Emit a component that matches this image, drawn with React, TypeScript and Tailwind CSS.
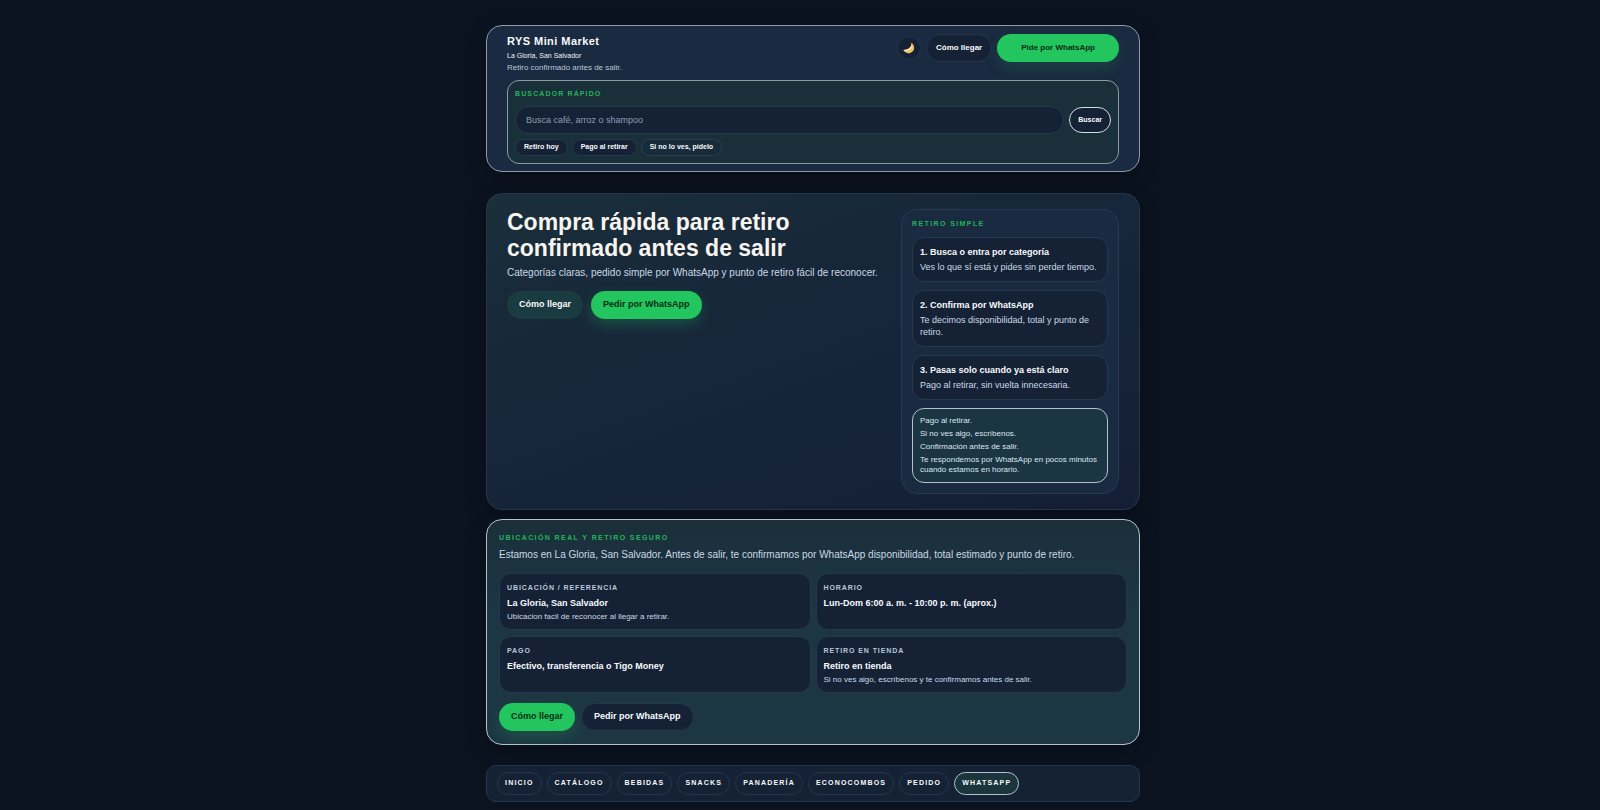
import type { ReactNode } from "react";

const chips = ["Retiro hoy", "Pago al retirar", "Si no lo ves, pídelo"];

const steps = [
  { title: "1. Busca o entra por categoría", text: "Ves lo que sí está y pides sin perder tiempo." },
  { title: "2. Confirma por WhatsApp", text: "Te decimos disponibilidad, total y punto de retiro." },
  { title: "3. Pasas solo cuando ya está claro", text: "Pago al retirar, sin vuelta innecesaria." },
];

const notes = [
  "Pago al retirar.",
  "Si no ves algo, escríbenos.",
  "Confirmación antes de salir.",
  "Te respondemos por WhatsApp en pocos minutos cuando estamos en horario.",
];

const facts = [
  { label: "Ubicación / referencia", value: "La Gloria, San Salvador", note: "Ubicacion facil de reconocer al llegar a retirar." },
  { label: "Horario", value: "Lun-Dom 6:00 a. m. - 10:00 p. m. (aprox.)", note: "" },
  { label: "Pago", value: "Efectivo, transferencia o Tigo Money", note: "" },
  { label: "Retiro en tienda", value: "Retiro en tienda", note: "Si no ves algo, escríbenos y te confirmamos antes de salir." },
];

const links = ["Inicio", "Catálogo", "Bebidas", "Snacks", "Panadería", "Econocombos", "Pedido"];

function Eyebrow({ children }: { children: ReactNode }) {
  return <h2 className="text-[7px] leading-[10px] font-bold uppercase tracking-[0.2em] text-[#22b357]">{children}</h2>;
}

function Moon() {
  return (
    <svg viewBox="0 0 24 24" className="size-3" aria-hidden="true">
      <path d="M16.500 1.500c2 6.500-3.500 14-15.500 14.500 2.300 5 8 7.500 13.500 6C23.500 19.500 25.500 7.500 16.500 1.500z" fill="#f2c06a" />
      <path d="M16.500 1.500c2 6.500-3.500 14-15.500 14.500.4.9.9 1.700 1.500 2.400C15.500 18.500 20.500 10.500 16.500 1.500z" fill="#fde3a7" />
    </svg>
  );
}

export default function App() {
  return (
    <div className="min-h-screen bg-[#0b1320] pt-[25px] pb-2 pl-[26px] font-['Liberation_Sans',Arial,sans-serif] text-[#f8fafc]">
      <div className="mx-auto flex w-full max-w-[654px] flex-col">
        <header className="rounded-[16px] border border-[#8f9bab] bg-[#1a2a40] px-5 pt-2 pb-[7px] shadow-[0_6px_20px_rgba(0,0,0,0.25)]">
          <div className="flex items-start justify-between">
            <div>
              <p className="text-[11px] leading-[15px] font-bold tracking-[0.04em]">RYS Mini Market</p>
              <p className="mt-px text-[7px] leading-3 text-[#eef4fb]">La Gloria, San Salvador</p>
              <p className="text-[8px] leading-3 text-[#b9c7d8]">Retiro confirmado antes de salir.</p>
            </div>
            <div className="flex items-center gap-[5px]">
              <button type="button" aria-label="Cambiar tema" className="flex size-6 items-center justify-center rounded-full border border-[#24354b] bg-[#152236]">
                <Moon />
              </button>
              <a href="#llegar" className="flex h-7 items-center rounded-full border border-[#24354b] bg-[#152236] px-[9px] text-[8px] font-bold">Cómo llegar</a>
              <a href="#whatsapp" className="flex h-7 items-center rounded-full bg-[#22c55e] px-6 text-[8px] font-bold text-[#052e16] shadow-[0_6px_14px_rgba(34,197,94,0.14)]">Pide por WhatsApp</a>
            </div>
          </div>
          <form className="mt-[6px] rounded-[12px] border border-[#8b9c9f] bg-[#192f3a] px-[7px] pt-2 pb-[7px]">
            <label htmlFor="buscador" className="block text-[7px] leading-[10px] font-bold uppercase tracking-[0.16em] text-[#22b357]">Buscador rápido</label>
            <div className="mt-[7px] flex items-center gap-[5px]">
              <input id="buscador" type="search" placeholder="Busca café, arroz o shampoo" className="h-7 min-w-0 flex-1 rounded-full border border-[#24394a] bg-[#152236] px-[10px] text-[9px] outline-none placeholder:text-[#8f9db1]" />
              <button type="button" className="h-[26px] rounded-full border border-[#d5dce5] bg-[#152236] px-2 text-[7px] font-bold">Buscar</button>
            </div>
            <div className="mt-[5px] flex gap-1">
              {chips.map((c, i) => (
                <span key={c} className={`flex h-[17px] items-center rounded-full border px-2 text-[7px] font-bold ${i < 2 ? "border-[#24394a] bg-[#152236]" : "border-[#2a4150] bg-[#182b3a]"}`}>{c}</span>
              ))}
            </div>
          </form>
        </header>

        <main className="mt-[21px] flex flex-col gap-[9px]">
          <section className="grid grid-cols-[1fr_218px] gap-4 rounded-[16px] border border-[#26374c] bg-[linear-gradient(160deg,#1a2f3a_0%,#17273a_35%,#141f36_100%)] px-5 py-[15px] shadow-[0_6px_20px_rgba(0,0,0,0.25)]">
            <div>
              <h1 className="text-[23px] leading-[26px] font-bold text-[#f8f5f0]">Compra rápida para retiro<br />confirmado antes de salir</h1>
              <p className="mt-1 text-[10px] leading-4 text-[#cbd8e8]">Categorías claras, pedido simple por WhatsApp y punto de retiro fácil de reconocer.</p>
              <div className="mt-[10px] flex gap-2">
                <a href="#llegar" className="flex h-7 items-center rounded-full bg-[#1a3b3f] px-3 text-[9px] font-bold">Cómo llegar</a>
                <a href="#whatsapp" className="flex h-7 items-center rounded-full bg-[#22c55e] px-3 text-[9px] font-bold text-[#052e16] shadow-[0_6px_14px_rgba(34,197,94,0.25)]">Pedir por WhatsApp</a>
              </div>
            </div>
            <aside className="flex flex-col gap-2 rounded-[16px] border border-[#283b50] bg-[#1a2a40] px-[10px] pt-[9px] pb-[10px]">
              <Eyebrow>Retiro simple</Eyebrow>
              {steps.map((s) => (
                <div key={s.title} className="rounded-[12px] border border-[#263a4e] bg-[#152236] px-[7px] py-2">
                  <h3 className="text-[9px] leading-3 font-bold">{s.title}</h3>
                  <p className="mt-[3px] text-[9px] leading-3 text-[#cbd8e8]">{s.text}</p>
                </div>
              ))}
              <ul className="flex flex-col gap-[3px] rounded-[12px] border border-[#b4c2cb] bg-[#1c3542] p-[7px] text-[8px] leading-[10px] text-[#dbe6f3]">
                {notes.map((n) => <li key={n}>{n}</li>)}
              </ul>
            </aside>
          </section>

          <section className="rounded-[16px] border border-[#b4c2cb] bg-linear-to-b from-[#1a2f3a] to-[#1d3644] to-40% px-3 py-[13px] shadow-[0_6px_20px_rgba(0,0,0,0.25)]">
            <Eyebrow>Ubicación real y retiro seguro</Eyebrow>
            <p className="mt-1 text-[10px] leading-4 text-[#cbd8e8]">Estamos en La Gloria, San Salvador. Antes de salir, te confirmamos por WhatsApp disponibilidad, total estimado y punto de retiro.</p>
            <dl className="mt-[10px] grid grid-cols-2 gap-x-[5px] gap-y-[6px]">
              {facts.map((f) => (
                <div key={f.label} className="min-h-[57px] rounded-[12px] border border-[#24394a] bg-[#152236] px-[7px] pt-[9px] pb-[7px]">
                  <dt className="text-[7px] leading-[10px] font-bold uppercase tracking-[0.13em] text-[#b9c7d8]">{f.label}</dt>
                  <dd className="mt-1 text-[9px] leading-3 font-bold">{f.value}</dd>
                  {f.note && <dd className="mt-[3px] text-[8px] leading-[10px] text-[#cbd8e8]">{f.note}</dd>}
                </div>
              ))}
            </dl>
            <div className="mt-[10px] flex gap-[6px]">
              <a href="#llegar" className="flex h-7 items-center rounded-full bg-[#22c55e] px-3 text-[9px] font-bold text-[#052e16] shadow-[0_6px_14px_rgba(34,197,94,0.2)]">Cómo llegar</a>
              <a href="#whatsapp" className="flex h-7 items-center rounded-full border border-[#24394a] bg-[#152236] px-3 text-[9px] font-bold">Pedir por WhatsApp</a>
            </div>
          </section>
        </main>

        <nav className="mt-5 flex gap-[5px] rounded-[10px] border border-[#24364a] bg-[#152236] px-[10px] py-[6px]">
          {links.map((l) => (
            <a key={l} href={`#${l}`} className="flex h-[23px] items-center rounded-full border border-[#24364a] px-[7px] text-[7px] font-bold uppercase tracking-[0.17em]">{l}</a>
          ))}
          <a href="#whatsapp" className="flex h-[23px] items-center rounded-full border border-[#b4c2cb] bg-[#1a353b] px-[7px] text-[7px] font-bold uppercase tracking-[0.17em]">WhatsApp</a>
        </nav>
      </div>
    </div>
  );
}
